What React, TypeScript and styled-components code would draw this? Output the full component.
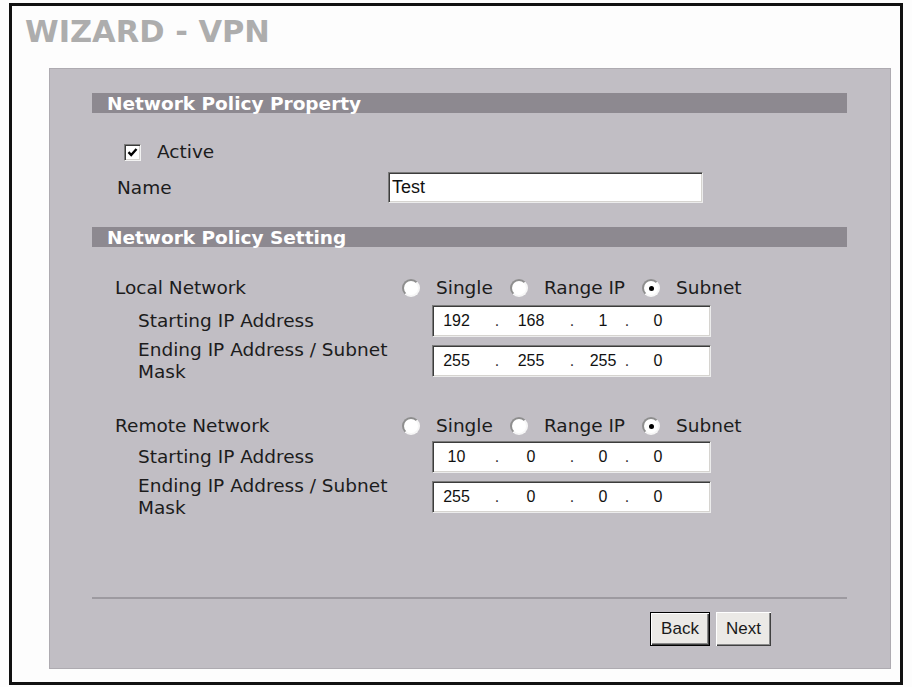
import React from "react";
import styled, { createGlobalStyle } from "styled-components";

const GlobalStyle = createGlobalStyle`
  html, body { margin: 0; padding: 0; background: #fdfdfd; }
  body { font-family: "DejaVu Sans", Verdana, sans-serif; }
`;

const Frame = styled.div`
  box-sizing: border-box;
  margin: 3px 9px 0 9px;
  height: 682px;
  border: 3px solid #111;
  background: #fdfdfd;
  display: flex;
  flex-direction: column;
`;

const Title = styled.h1`
  margin: 8px 0 0 13px;
  font-family: "DejaVu Sans", Verdana, sans-serif;
  font-weight: bold;
  font-size: 30.5px;
  line-height: 36px;
  color: #adadad;
`;

const Panel = styled.div`
  box-sizing: border-box;
  margin: 18px 9px 0 37px;
  height: 601px;
  border: 1px solid #aeabb1;
  background: #c1bec4;
  padding: 24px 43px 22px 42px;
  display: flex;
  flex-direction: column;
`;

const SectionBar = styled.div<{ $mt?: number }>`
  box-sizing: border-box;
  height: 20px;
  margin-top: ${(p) => p.$mt ?? 0}px;
  padding: 2px 0 0 15px;
  background: #8d8990;
  color: #fff;
  font-family: "DejaVu Sans", Verdana, sans-serif;
  font-weight: bold;
  font-size: 18.5px;
  line-height: 18px;
  white-space: nowrap;
`;

const CheckRow = styled.label`
  display: flex;
  align-items: center;
  gap: 16px;
  height: 22px;
  margin-top: 28px;
  padding-left: 32px;
  font-size: 18.5px;
  line-height: 22px;
  color: #1c1c1c;
`;

const CheckBox = styled.span`
  box-sizing: border-box;
  width: 17px;
  height: 17px;
  background: #fff;
  border: 1px solid;
  border-color: #7c7c7c #f2f2f2 #f2f2f2 #7c7c7c;
  box-shadow: inset 1px 1px 0 #3a3a3a, inset -1px -1px 0 #d6d4d0;
  display: flex;
  align-items: center;
  justify-content: center;
`;

const FieldRow = styled.div<{ $indent: number; $mt: number }>`
  display: flex;
  align-items: center;
  margin-top: ${(p) => p.$mt}px;
  padding-left: ${(p) => p.$indent}px;
`;

const Label = styled.span<{ $w: number }>`
  flex: none;
  width: ${(p) => p.$w}px;
  font-size: 18.5px;
  line-height: 22px;
  color: #1c1c1c;
`;

const TextInput = styled.input`
  box-sizing: border-box;
  width: 315px;
  height: 31px;
  padding: 0 0 0 3px;
  margin: 0;
  background: #fff;
  border: 1px solid;
  border-color: #7a7a7a #ececec #ececec #7a7a7a;
  box-shadow: inset 1px 1px 0 #3c3c3c, inset -1px -1px 0 #d6d4d0;
  font-family: "Liberation Sans", Arial, sans-serif;
  font-size: 18px;
  color: #111;
  outline: none;
`;

const RadioGroup = styled.div`
  display: flex;
  align-items: center;
  gap: 17px;
`;

const RadioOption = styled.label`
  display: flex;
  align-items: center;
  gap: 16px;
  font-size: 18.5px;
  line-height: 22px;
  color: #1c1c1c;
`;

const Radio = styled.span<{ $checked?: boolean }>`
  box-sizing: border-box;
  width: 18px;
  height: 18px;
  border-radius: 50%;
  background: #fff;
  border: 2px solid;
  border-color: #8e8e8e #f6f6f6 #f6f6f6 #8e8e8e;
  display: flex;
  align-items: center;
  justify-content: center;
  &::after {
    content: "";
    width: 5px;
    height: 5px;
    border-radius: 50%;
    background: ${(p) => (p.$checked ? "#000" : "transparent")};
  }
`;

const IPBox = styled.div`
  box-sizing: border-box;
  width: 279px;
  height: 32px;
  display: grid;
  grid-template-columns: 47px 34px 34px 48px 14px 34px 28px;
  justify-items: center;
  align-items: center;
  background: #fff;
  border: 1px solid;
  border-color: #7a7a7a #ececec #ececec #7a7a7a;
  box-shadow: inset 1px 1px 0 #3c3c3c, inset -1px -1px 0 #d6d4d0;
  font-family: "Liberation Sans", Arial, sans-serif;
  font-size: 16px;
  color: #111;
`;

const Octet = styled.span`
  white-space: nowrap;
`;

const Dot = styled.span`
  white-space: nowrap;
  color: #333;
`;

const Footer = styled.div`
  margin-top: auto;
`;

const Divider = styled.div`
  height: 0;
  border-top: 2px solid #9d9aa0;
`;

const ButtonRow = styled.div`
  display: flex;
  justify-content: flex-end;
  gap: 6px;
  padding: 13px 76px 0 0;
`;

const Button = styled.button<{ $default?: boolean; $w: number }>`
  box-sizing: border-box;
  width: ${(p) => p.$w}px;
  height: 34px;
  padding: 0;
  margin: 0;
  font-family: "Liberation Sans", Arial, sans-serif;
  font-size: 17px;
  color: #1a1a1a;
  background: #ebe9e6;
  border: ${(p) => (p.$default ? "1px solid #000" : "none")};
  box-shadow: inset 1px 1px 0 #ffffff, inset -1px -1px 0 #404040,
    inset -2px -2px 0 #8a8a8a;
`;

const ipRows = {
  local: {
    start: ["192", "168", "1", "0"],
    end: ["255", "255", "255", "0"],
  },
  remote: {
    start: ["10", "0", "0", "0"],
    end: ["255", "0", "0", "0"],
  },
};

function IPField({ parts }: { parts: string[] }) {
  return (
    <IPBox>
      <Octet>{parts[0]}</Octet>
      <Dot>.</Dot>
      <Octet>{parts[1]}</Octet>
      <Dot>.</Dot>
      <Octet>{parts[2]}</Octet>
      <Dot>.</Dot>
      <Octet>{parts[3]}</Octet>
    </IPBox>
  );
}

function RadioChoice() {
  return (
    <RadioGroup>
      <RadioOption>
        <Radio />
        Single
      </RadioOption>
      <RadioOption>
        <Radio />
        Range IP
      </RadioOption>
      <RadioOption>
        <Radio $checked />
        Subnet
      </RadioOption>
    </RadioGroup>
  );
}

function NetworkBlock({
  title,
  parts,
  mt,
}: {
  title: string;
  parts: { start: string[]; end: string[] };
  mt: number;
}) {
  return (
    <>
      <FieldRow $indent={23} $mt={mt}>
        <Label $w={287}>{title}</Label>
        <RadioChoice />
      </FieldRow>
      <FieldRow $indent={46} $mt={mt === 30 ? 6 : 4}>
        <Label $w={294}>Starting IP Address</Label>
        <IPField parts={parts.start} />
      </FieldRow>
      <FieldRow $indent={46} $mt={2}>
        <Label $w={294}>Ending IP Address / Subnet Mask</Label>
        <IPField parts={parts.end} />
      </FieldRow>
    </>
  );
}

export default function App() {
  return (
    <>
      <GlobalStyle />
      <Frame>
        <Title>WIZARD - VPN</Title>
        <Panel>
          <SectionBar>Network Policy Property</SectionBar>
          <CheckRow>
            <CheckBox>
              <svg width="11" height="11" viewBox="0 0 11 11">
                <path
                  d="M1.5 5.2 L4.2 8 L9.5 2"
                  fill="none"
                  stroke="#000"
                  strokeWidth="2.4"
                />
              </svg>
            </CheckBox>
            Active
          </CheckRow>
          <FieldRow $indent={25} $mt={9}>
            <Label $w={271}>Name</Label>
            <TextInput defaultValue="Test" />
          </FieldRow>
          <SectionBar $mt={24}>Network Policy Setting</SectionBar>
          <NetworkBlock title="Local Network" parts={ipRows.local} mt={30} />
          <NetworkBlock title="Remote Network" parts={ipRows.remote} mt={32} />
          <Footer>
            <Divider />
            <ButtonRow>
              <Button $default $w={60}>
                Back
              </Button>
              <Button $w={55}>Next</Button>
            </ButtonRow>
          </Footer>
        </Panel>
      </Frame>
    </>
  );
}
